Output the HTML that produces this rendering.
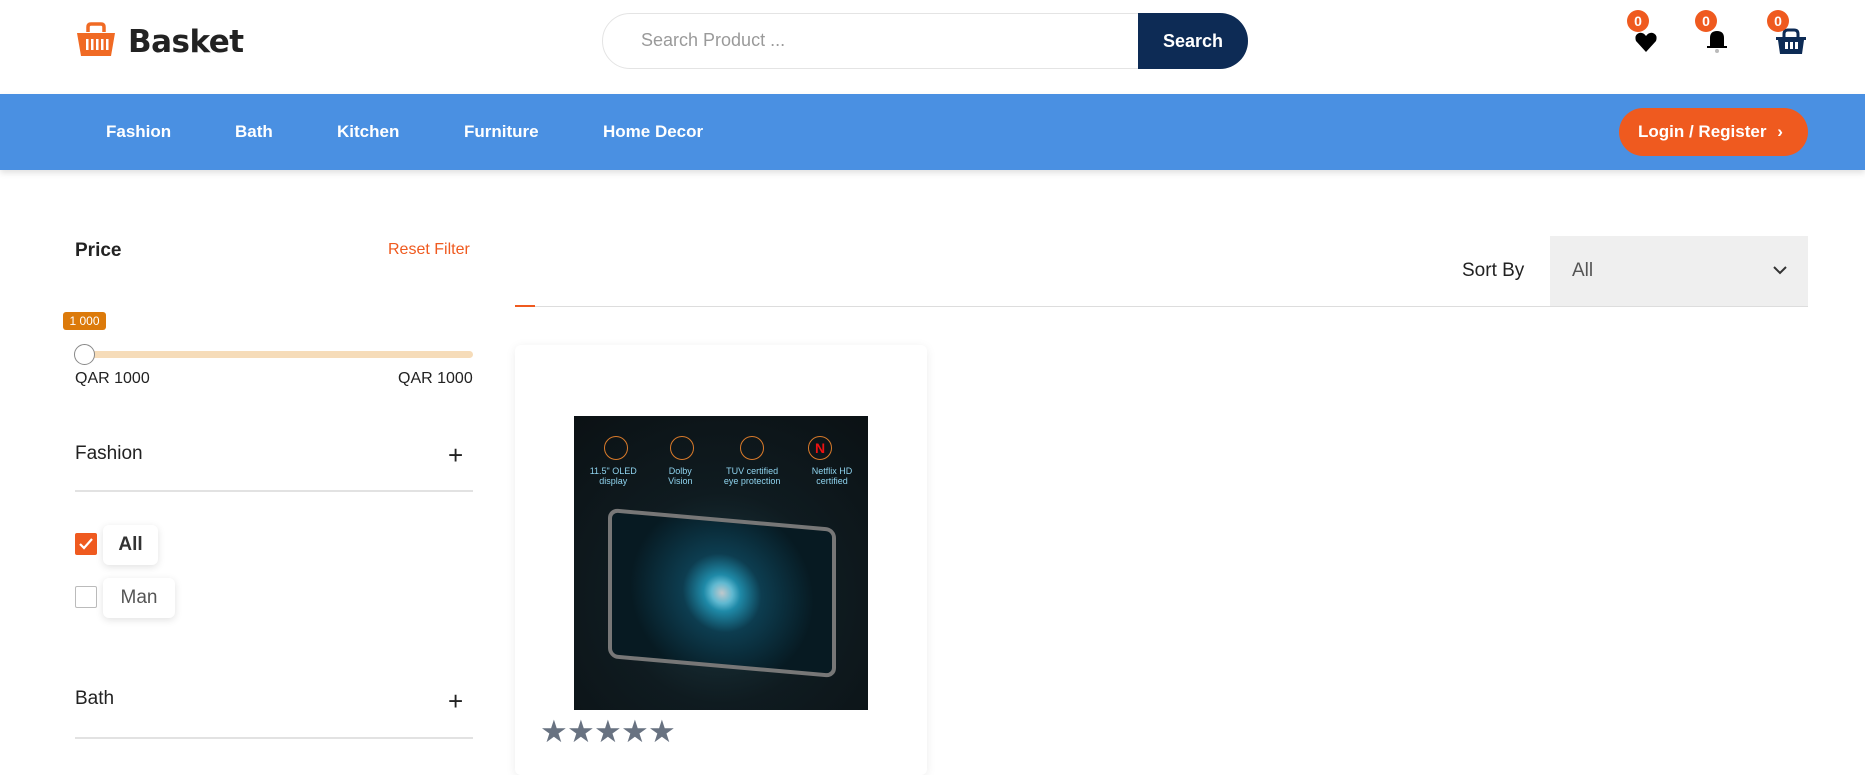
<!DOCTYPE html>
<html><head><meta charset="utf-8"><style>
*{margin:0;padding:0;box-sizing:border-box}
body{width:1865px;height:760px;overflow:hidden;background:#fff;font-family:"Liberation Sans",Arial,sans-serif;position:relative;color:#222}
.a{position:absolute}
.badge{position:absolute;width:22px;height:22px;border-radius:50%;background:#ef5a1f;color:#fff;font-size:14px;font-weight:bold;text-align:center;line-height:22px}
.nav{position:absolute;left:0;top:94px;width:1865px;height:76px;background:#4a90e2;box-shadow:0 3px 6px rgba(0,0,0,.12)}
.nav span{position:absolute;top:28px;color:#fff;font-weight:bold;font-size:17px}
.hr{position:absolute;left:75px;width:398px;height:2px;background:#e2e2e2}
.star{position:absolute;top:714px;color:#687281;font-size:31px}
</style></head><body>
<!-- logo -->
<svg class="a" style="left:76px;top:22px" width="40" height="36" viewBox="0 0 40 36"><path d="M12 10 V5 Q12 2 15 2 H25 Q28 2 28 5 V10" fill="none" stroke="#f06a24" stroke-width="3.5"/><path d="M1 11 H39 L35 34 H5 Z" fill="#f06a24"/><g fill="#fff"><rect x="10" y="17" width="2.5" height="11"/><rect x="15" y="17" width="2.5" height="11"/><rect x="20" y="17" width="2.5" height="11"/><rect x="25" y="17" width="2.5" height="11"/><rect x="30" y="17" width="2.5" height="11"/></g></svg>
<div class="a" style="left:128px;top:24px;font-family:'DejaVu Sans',sans-serif;font-size:31px;font-weight:bold;color:#222;letter-spacing:-0.5px">Basket</div>
<!-- search -->
<div class="a" style="left:602px;top:13px;width:646px;height:56px;border:1px solid #e4e4e4;border-radius:28px;background:#fff"></div>
<div class="a" style="left:641px;top:30px;font-size:18px;color:#9a9a9a">Search Product ...</div>
<div class="a" style="left:1138px;top:13px;width:110px;height:56px;background:#0d2b55;border-radius:0 28px 28px 0;color:#fff;font-size:18px;font-weight:bold;text-align:center;line-height:56px">Search</div>
<!-- icons -->
<svg class="a" style="left:1634px;top:30px" width="24" height="24" viewBox="0 0 24 24"><path d="M12 22 L2 11 Q0 5 5 3 Q9 2 12 6 Q15 2 19 3 Q24 5 22 11 Z" fill="#000"/></svg>
<svg class="a" style="left:1706px;top:28px" width="22" height="26" viewBox="0 0 22 26"><path d="M4 18 V10 Q4 3 11 3 Q18 3 18 10 V18 H21 V20 H1 V18 Z" fill="#000"/><circle cx="11" cy="23" r="2" fill="#bbb"/></svg>
<svg class="a" style="left:1775px;top:28px" width="32" height="28" viewBox="0 0 32 28"><path d="M9 9 V6 Q9 2 13 2 H19 Q23 2 23 6 V9" fill="none" stroke="#0d2b55" stroke-width="3"/><path d="M1 9 H31 V12 H29 L27 26 H5 L3 12 H1 Z" fill="#0d2b55"/><g fill="#fff"><rect x="10" y="14" width="3" height="7"/><rect x="15" y="14" width="3" height="7"/><rect x="20" y="14" width="3" height="7"/></g></svg>
<div class="badge" style="left:1627px;top:10px">0</div>
<div class="badge" style="left:1695px;top:10px">0</div>
<div class="badge" style="left:1767px;top:10px">0</div>
<!-- nav -->
<div class="nav"><span style="left:106px">Fashion</span><span style="left:235px">Bath</span><span style="left:337px">Kitchen</span><span style="left:464px">Furniture</span><span style="left:603px">Home Decor</span>
<div style="position:absolute;left:1619px;top:14px;width:189px;height:48px;border-radius:24px;background:#ef5a1f;color:#fff;font-weight:bold;font-size:17px;line-height:48px;padding-left:19px">Login / Register <span style="position:static;margin-left:6px">›</span></div></div>
<!-- sidebar -->
<div class="a" style="left:75px;top:240px;font-size:19px;font-weight:bold;color:#222">Price</div>
<div class="a" style="left:388px;top:241px;font-size:16px;color:#ef5a1f">Reset Filter</div>
<div class="a" style="left:63px;top:312px;width:43px;height:18px;background:#dc7a0a;border-radius:3px;color:#fff;font-size:12px;text-align:center;line-height:18px">1 000</div>
<div class="a" style="left:75px;top:351px;width:398px;height:7px;background:#f6dcb9;border-radius:4px"></div>
<div class="a" style="left:74px;top:344px;width:21px;height:21px;border-radius:50%;background:#fff;border:1px solid #888"></div>
<div class="a" style="left:75px;top:370px;font-size:16px">QAR 1000</div>
<div class="a" style="left:398px;top:370px;font-size:16px">QAR 1000</div>
<div class="a" style="left:75px;top:443px;font-size:19px">Fashion</div>
<div class="a" style="left:448px;top:440px;font-size:26px;font-weight:300">+</div>
<div class="hr" style="top:490px"></div>
<div class="a" style="left:75px;top:533px;width:22px;height:22px;background:#ef5a1f;border-radius:2px"><svg width="22" height="22"><path d="M5 11 L9 15 L17 6" fill="none" stroke="#fff" stroke-width="2.2"/></svg></div>
<div class="a" style="left:103px;top:525px;width:55px;height:40px;border-radius:6px;box-shadow:0 2px 8px rgba(0,0,0,.12);font-size:19px;font-weight:bold;line-height:40px;text-align:center;color:#333">All</div>
<div class="a" style="left:75px;top:586px;width:22px;height:22px;border:1.5px solid #bbb;border-radius:2px"></div>
<div class="a" style="left:103px;top:578px;width:72px;height:40px;border-radius:6px;box-shadow:0 2px 8px rgba(0,0,0,.12);font-size:19px;line-height:40px;text-align:center;color:#555">Man</div>
<div class="a" style="left:75px;top:688px;font-size:19px">Bath</div>
<div class="a" style="left:448px;top:686px;font-size:26px;font-weight:300">+</div>
<div class="hr" style="top:737px"></div>
<!-- top bar -->
<div class="a" style="left:1462px;top:260px;font-size:19px">Sort By</div>
<div class="a" style="left:1550px;top:236px;width:258px;height:70px;background:#efefef"></div>
<div class="a" style="left:1572px;top:260px;font-size:19px;color:#555">All</div>
<svg class="a" style="left:1772px;top:264px" width="16" height="12"><path d="M2 3 L8 9 L14 3" fill="none" stroke="#333" stroke-width="2"/></svg>
<div class="a" style="left:515px;top:306px;width:1293px;height:1px;background:#ddd"></div>
<div class="a" style="left:515px;top:305px;width:20px;height:2px;background:#ef5a1f"></div>
<!-- card -->
<div class="a" style="left:515px;top:345px;width:412px;height:430px;background:#fff;border-radius:6px;box-shadow:0 2px 10px rgba(0,0,0,.08)"></div>
<div class="a" style="left:574px;top:416px;width:294px;height:294px;background:radial-gradient(circle at 50% 62%,#1d3b44 0%,#0f1b20 45%,#0b1114 100%);overflow:hidden">
<div style="position:absolute;left:34px;top:102px;width:228px;height:150px;border:4px solid #777;border-radius:10px;background:radial-gradient(circle at 50% 50%,#c0c8cc 0,#5fb8d0 8%,#1f8aa8 14%,#0d3d50 30%,#071a22 70%);transform:skewY(5deg)"></div>
<div style="position:absolute;left:0;top:50px;width:294px;font-size:9px;color:#8fd3ee;display:flex;justify-content:space-around;text-align:center;line-height:10px"><span>11.5" OLED<br>display</span><span>Dolby<br>Vision</span><span>TUV certified<br>eye protection</span><span>Netflix HD<br>certified</span></div>
<div style="position:absolute;top:20px;left:30px;width:24px;height:24px;border:1.5px solid #d97a2a;border-radius:50%"></div>
<div style="position:absolute;top:20px;left:96px;width:24px;height:24px;border:1.5px solid #d97a2a;border-radius:50%"></div>
<div style="position:absolute;top:20px;left:166px;width:24px;height:24px;border:1.5px solid #d97a2a;border-radius:50%"></div>
<div style="position:absolute;top:20px;left:234px;width:24px;height:24px;border:1.5px solid #d97a2a;border-radius:50%;color:#e11;font-weight:bold;font-size:14px;text-align:center;line-height:22px">N</div>
</div>
<span class="star" style="left:540px">★</span><span class="star" style="left:567px">★</span><span class="star" style="left:594px">★</span><span class="star" style="left:621px">★</span><span class="star" style="left:648px">★</span>
</body></html>
